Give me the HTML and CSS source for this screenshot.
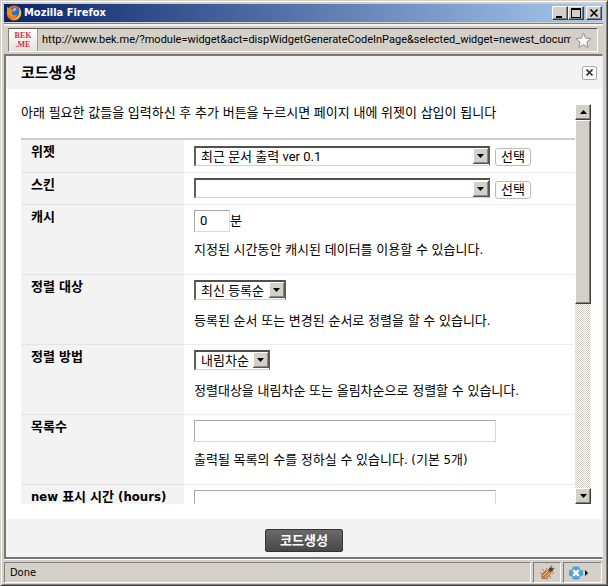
FILE: index.html
```html
<!DOCTYPE html>
<html lang="ko">

<head>
    <meta charset="UTF-8">
    <meta name="viewport" content="width=device-width, initial-scale=1.0">
    <title>코드생성</title>
    <link rel="stylesheet" href="styles.css">
</head>

<body>
    <div class="window">
        <div class="titlebar">
            <svg class="logo" width="16" height="16" viewBox="0 0 16 16">
                <circle cx="8" cy="8" r="7.4" fill="#e8701a" />
                <circle cx="8.6" cy="7" r="5" fill="#2a6fc0" />
                <path d="M8 2.500c2 .2 2.800 1.200 2.300 2.600L8.500 6.500 6.500 5z" fill="#7cc4ee" />
                <path d="M1.200 1.800C2 3 3 3.200 4.500 3.200 5 4.400 6.800 4.800 7.500 5.600 6.500 7.500 5.500 7.200 6 8.800c.8 1.800 3.500 1.600 4.800.6-.8 3-4 4-6.600 2.600C1.500 10.500.4 6 1.200 1.800z" fill="#f08a24" />
                <path d="M13 2.200c2.500 2.600 2.800 6.600.8 9.500-2 2.800-6 3.800-9 2.300 4 .4 7.200-1.400 8-4.600.6-2.300.8-4.700.2-7.200z" fill="#fbc33c" />
            </svg>
            <span class="title">Mozilla Firefox</span>
            <button class="win-btn" aria-label="Minimize"><svg width="12" height="10"><path d="M2 8h6v2H2z" /></svg></button>
            <button class="win-btn" aria-label="Maximize"><svg width="12" height="10"><path d="M1 0h10v10H1zM2 2v7h8V2z" fill-rule="evenodd" /></svg></button>
            <button class="win-btn win-close" aria-label="Close"><svg width="12" height="10"><path d="M2.500 1.500l7 7M9.500 1.500l-7 7" stroke="#000" stroke-width="1.700" /></svg></button>
        </div>

        <div class="navbar">
            <div class="address">
                <span class="favicon">BEK<br>.ME</span>
                <input class="url" type="text" aria-label="URL" readonly value="http://www.bek.me/?module=widget&amp;act=dispWidgetGenerateCodeInPage&amp;selected_widget=newest_document">
                <svg class="star" width="17" height="17" viewBox="0 0 17 17">
                    <path d="M8.500 1.200l2.100 4.900 5.300.5-4 3.500 1.200 5.300-4.600-2.800-4.600 2.800 1.200-5.300-4-3.500 5.300-.5z" fill="#fff" stroke="#8f8f8f" stroke-linejoin="round" />
                </svg>
            </div>
        </div>

        <form class="page">
            <div class="page-header">
                <h1>코드생성</h1>
                <button type="button" class="close" aria-label="닫기"><svg width="7" height="7"><path d="M.5.5l6 6M6.500.5l-6 6" stroke="#333" stroke-width="1.600" /></svg></button>
            </div>

            <div class="scroll">
                <div class="scroll-content">
                    <p class="intro">아래 필요한 값들을 입력하신 후 추가 버튼을 누르시면 페이지 내에 위젯이 삽입이 됩니다</p>
                    <table class="options">
                        <tr class="short">
                            <th><label for="widget">위젯</label></th>
                            <td>
                                <div class="field">
                                    <select id="widget" class="wide"><option>최근 문서 출력 ver 0.1</option></select>
                                    <button type="button" class="pick">선택</button>
                                </div>
                            </td>
                        </tr>
                        <tr class="short">
                            <th><label for="skin">스킨</label></th>
                            <td>
                                <div class="field">
                                    <select id="skin" class="wide"><option></option></select>
                                    <button type="button" class="pick">선택</button>
                                </div>
                            </td>
                        </tr>
                        <tr>
                            <th><label for="cache">캐시</label></th>
                            <td>
                                <div class="unit"><input type="text" id="cache" class="minutes" value="0">분</div>
                                <p>지정된 시간동안 캐시된 데이터를 이용할 수 있습니다.</p>
                            </td>
                        </tr>
                        <tr>
                            <th><label for="target">정렬 대상</label></th>
                            <td>
                                <select id="target"><option>최신 등록순</option></select>
                                <p>등록된 순서 또는 변경된 순서로 정렬을 할 수 있습니다.</p>
                            </td>
                        </tr>
                        <tr>
                            <th><label for="order">정렬 방법</label></th>
                            <td>
                                <select id="order"><option>내림차순</option></select>
                                <p>정렬대상을 내림차순 또는 올림차순으로 정렬할 수 있습니다.</p>
                            </td>
                        </tr>
                        <tr>
                            <th><label for="count">목록수</label></th>
                            <td>
                                <input type="text" id="count">
                                <p>출력될 목록의 수를 정하실 수 있습니다. (기본 5개)</p>
                            </td>
                        </tr>
                        <tr>
                            <th><label for="hours">new 표시 시간 (hours)</label></th>
                            <td><input type="text" id="hours"></td>
                        </tr>
                    </table>
                </div>
                <div class="scrollbar">
                    <button type="button" class="bar-btn" aria-label="위로"><svg width="7" height="4"><path d="M0 4h7L3.500 0z" /></svg></button>
                    <div class="track"><div class="thumb"></div></div>
                    <button type="button" class="bar-btn" aria-label="아래로"><svg width="7" height="4"><path d="M0 0h7L3.500 4z" /></svg></button>
                </div>
            </div>

            <div class="page-footer">
                <button type="submit" class="submit">코드생성</button>
            </div>
        </form>

        <div class="statusbar">
            <span class="cell message">Done</span>
            <span class="cell bug">
                <svg width="16" height="16" viewBox="0 0 16 16">
                    <path d="M1 8l4 1M3 4l3 3M7 3l2 3M3 13l3-2M8 15l0-3M12 13l-2-3M15 8l-4 0" stroke="#b87c50" fill="none" />
                    <ellipse cx="7" cy="9.500" rx="5.800" ry="3.600" transform="rotate(-42 7 9.500)" fill="#c07840" />
                    <path d="M4 11l5-5M6 12.500l5-4.500" stroke="#f0c898" />
                    <circle cx="12" cy="4.500" r="2.200" fill="#4a4038" />
                    <path d="M12 2l1-2M14 4l2-1" stroke="#777" />
                </svg>
            </span>
            <span class="cell addon">
                <svg width="22" height="16" viewBox="0 0 22 16">
                    <path d="M4 1.500h6l1 3 3 1v5l-3 1-1 3H4l-1-3-3-1v-5l3-1z" fill="#4ba3dc" />
                    <path d="M4.200 5.200l5.600 5.600M9.800 5.200l-5.600 5.600" stroke="#fff" stroke-width="2.400" />
                    <path d="M16 5v6l3-3z" />
                </svg>
            </span>
        </div>
    </div>
</body>

</html>
```
FILE: styles.css
```css
* {
    box-sizing: border-box;
}

body {
    margin: 0;
    font-family: "DejaVu Sans Condensed", "Noto Sans CJK KR", sans-serif;
    font-size: 13px;
    line-height: 18px;
    color: #000;
}

button,
input,
select {
    margin: 0;
    padding: 0;
    font: inherit;
    color: inherit;
    border-radius: 0;
}

input,
select {
    font-family: Roboto, "Noto Sans CJK KR", sans-serif;
}

h1,
p {
    margin: 0;
}

svg {
    display: block;
    flex: none;
}

/* window frame */
.window {
    display: flex;
    flex-direction: column;
    height: 100vh;
    padding: 3px 4px 2px 3px;
    background: #d4d0c8;
    border: 1px solid;
    border-color: #d4d0c8 #404040 #404040 #d4d0c8;
    box-shadow: inset 1px 1px #fff, inset -1px -1px #808080;
    overflow: hidden;
}

.titlebar {
    display: flex;
    align-items: center;
    flex: none;
    height: 18px;
    padding: 0 1px 0 2px;
    background: linear-gradient(to right, #0a246a, #a6caf0);
}

.title {
    flex: 1;
    padding-left: 2px;
    font-size: 11px;
    font-weight: bold;
    color: #fff;
}

.win-btn,
.bar-btn,
.thumb {
    background: #d4d0c8;
    border: 1px solid;
    border-color: #fff #404040 #404040 #fff;
    box-shadow: inset -1px -1px #808080;
}

.win-btn {
    width: 16px;
    height: 14px;
}

.win-btn svg {
    margin: 0 auto;
}

.win-close {
    margin-left: 2px;
}

/* address bar */
.navbar {
    flex: none;
    margin-top: 1px;
    padding: 4px 5px 2px 4px;
    border-top: 1px solid #808080;
    box-shadow: inset 0 2px #f4f2ee;
}

.address {
    display: flex;
    align-items: center;
    height: 24px;
    padding-right: 5px;
    border: 1px solid;
    border-color: #555 #fff #fff #808080;
}

.favicon {
    align-self: stretch;
    width: 29px;
    padding-top: 2px;
    background: linear-gradient(#fff, #e4e2de);
    border-right: 1px solid #999;
    font: bold 8px/9px "Liberation Serif", serif;
    color: #d8303c;
    text-align: center;
}

.url {
    flex: 1;
    min-width: 0;
    padding-left: 4px;
    border: 0;
    background: none;
    font-size: 11px;
}

.star {
    margin-left: 4px;
}

/* dialog */
.page {
    display: flex;
    flex-direction: column;
    flex: 1;
    min-height: 0;
    background: #fff;
    border: 2px solid #777;
    border-right: 1px solid #eee;
}

.page-header {
    display: flex;
    align-items: center;
    justify-content: space-between;
    flex: none;
    height: 33px;
    padding: 0 5px 0 15px;
    background: #f3f3f3;
}

.page-header h1 {
    font-size: 15px;
    font-weight: bold;
}

.close {
    display: flex;
    align-items: center;
    justify-content: center;
    width: 15px;
    height: 14px;
    background: #fff;
    border: 1px solid #aaa;
    border-radius: 2px;
}

.scroll {
    display: flex;
    flex: 1;
    min-height: 0;
    margin: 15px 11px 15px 15px;
}

.scroll-content {
    flex: 1;
    min-width: 0;
    overflow: hidden;
}

.intro {
    margin-bottom: 16px;
    white-space: nowrap;
}

.options {
    width: 100%;
    border-collapse: collapse;
    border-top: 2px solid #ccc;
}

.options tr {
    height: 70px;
}

.options .short {
    height: 32px;
}

.options .short:first-child {
    height: 33px;
}

.options th,
.options td {
    padding: 5px 10px;
    border-bottom: 1px solid #eee;
    vertical-align: top;
    text-align: left;
}

.options th {
    width: 163px;
    padding-top: 3px;
    background: #f3f3f3;
    border-color: #e4e4e4;
    white-space: nowrap;
}

.options p {
    margin-top: 9px;
}

.options select {
    display: block;
    height: 20px;
    padding: 0 20px 0 5px;
    appearance: none;
    background: #fff url("data:image/svg+xml,%3Csvg xmlns='http://www.w3.org/2000/svg' width='16' height='16'%3E%3Cpath fill='%23d4d0c8' d='M0 0h16v16H0z'/%3E%3Cpath fill='%23fff' d='M0 0h15v1H1v14H0z'/%3E%3Cpath fill='%23555' d='M15 0h1v16H0v-1h15z'/%3E%3Cpath fill='%23888' d='M14 1v13H1v1h14V1z'/%3E%3Cpath d='M4 6h7l-3.500 4z'/%3E%3C/svg%3E") right center no-repeat;
    border: 2px solid;
    border-color: #505050 #606060 #d4d0c8 #606060;
    border-right-width: 1px;
    border-bottom-width: 1px;
    line-height: 17px;
}

.options select + p {
    margin-top: 12px;
}

.options .wide {
    width: 296px;
}

.options input {
    display: block;
    width: 302px;
    height: 22px;
    padding: 0 5px;
    border: 1px solid;
    border-color: #a6a6a6 #d8d8d8 #d8d8d8 #a6a6a6;
}

.options .minutes {
    width: 36px;
}

.unit,
.field {
    display: flex;
    align-items: center;
}

.field {
    gap: 5px;
}

.pick {
    height: 18px;
    margin-top: 3px;
    padding: 0 5px;
    background: #fff;
    border: 1px solid #bbb;
    border-radius: 3px;
    line-height: 16px;
}

.scrollbar {
    display: flex;
    flex-direction: column;
    width: 16px;
}

.bar-btn {
    display: flex;
    align-items: center;
    justify-content: center;
    height: 16px;
}

.track {
    flex: 1;
    background: repeating-conic-gradient(#d4d0c8 0 25%, #fff 0 50%) 0 0 / 2px 2px;
}

.thumb {
    height: 50%;
}

.page-footer {
    display: flex;
    align-items: center;
    justify-content: center;
    flex: none;
    height: 38px;
    padding-top: 5px;
    background: #f3f3f3;
}

.submit {
    width: 78px;
    height: 23px;
    background: linear-gradient(#6a6a6a, #484848);
    border: 1px solid #333;
    border-radius: 2px;
    font-weight: bold;
    color: #fff;
}

/* status bar */
.statusbar {
    display: flex;
    gap: 2px;
    flex: none;
    height: 24px;
    padding: 3px 1px 0 0;
    box-shadow: inset 0 1px #fff;
    font-size: 11px;
}

.cell {
    display: flex;
    align-items: center;
    padding: 0 5px;
    border: 1px solid;
    border-color: #808080 #fff #fff #808080;
}

.message {
    flex: 1;
}

.addon {
    width: 39px;
}
```
